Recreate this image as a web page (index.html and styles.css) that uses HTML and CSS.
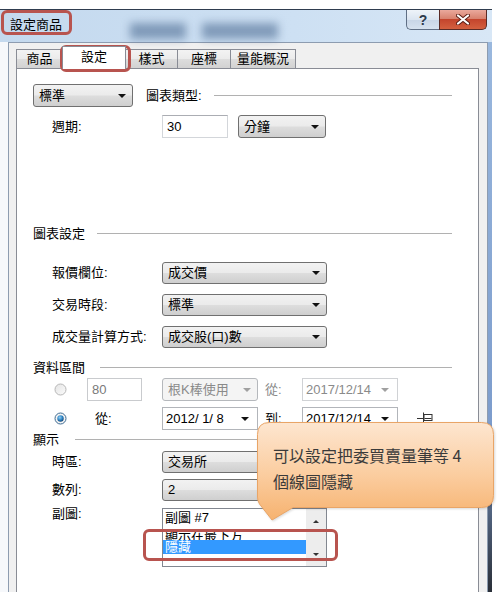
FILE: index.html
```html
<!DOCTYPE html>
<html lang="zh-Hant">
<head>
  <meta charset="UTF-8">
  <meta name="viewport" content="width=device-width, initial-scale=1.0">
  <title>設定商品</title>
  <link rel="stylesheet" href="styles.css">
</head>
<body>
  <div class="screen">
    <div class="titlebar">
      <span class="title">設定商品</span>
      <span class="haze haze-1"></span>
      <span class="haze haze-2"></span>
      <div class="caption-btns">
        <span class="cap cap-help">?</span>
        <span class="cap cap-close">
          <svg width="14" height="11" viewBox="0 0 14 11">
            <path d="M2 1.5 L12 9.5 M12 1.5 L2 9.5" stroke="#5a1d14" stroke-width="4" stroke-linecap="round"/>
            <path d="M2 1.5 L12 9.5 M12 1.5 L2 9.5" stroke="#fff" stroke-width="2.2" stroke-linecap="round"/>
          </svg>
        </span>
      </div>
    </div>

    <div class="frame">
      <div class="glass-left"></div>
      <div class="client">
        <div class="tabs">
          <div class="tab tab-w1">商品</div>
          <div class="tab tab-w2 active">設定</div>
          <div class="tab tab-w3">樣式</div>
          <div class="tab tab-w4">座標</div>
          <div class="tab tab-w5">量能概況</div>
        </div>

        <div class="panel">
          <div class="row row-type">
            <div class="combo w-type"><span>標準</span><i class="arrow"></i></div>
            <span class="type-label">圖表類型:</span>
            <span class="rule"></span>
          </div>

          <div class="row row-period">
            <span class="lbl">週期:</span>
            <div class="textbox w-period">30</div>
            <div class="combo w-unit"><span>分鐘</span><i class="arrow"></i></div>
          </div>

          <div class="group g-chart"><span>圖表設定</span><span class="rule"></span></div>

          <div class="row row-field first">
            <span class="lbl">報價欄位:</span>
            <div class="combo w-wide"><span>成交價</span><i class="arrow"></i></div>
          </div>
          <div class="row row-field">
            <span class="lbl">交易時段:</span>
            <div class="combo w-wide"><span>標準</span><i class="arrow"></i></div>
          </div>
          <div class="row row-field">
            <span class="lbl">成交量計算方式:</span>
            <div class="combo w-wide"><span>成交股(口)數</span><i class="arrow"></i></div>
          </div>

          <div class="group g-range"><span>資料區間</span><span class="rule"></span></div>

          <div class="row radio-row r-first">
            <svg class="radio" width="13" height="13" viewBox="0 0 13 13">
              <defs>
                <linearGradient id="rOff" x1="0" y1="0" x2="1" y2="1">
                  <stop offset="0" stop-color="#e4e4e4"/>
                  <stop offset="1" stop-color="#fbfbfb"/>
                </linearGradient>
              </defs>
              <circle cx="6.5" cy="6.5" r="5.5" fill="url(#rOff)" stroke="#b7b7b7"/>
            </svg>
            <div class="textbox disabled w-count">80</div>
            <div class="combo disabled w-date"><span>根K棒使用</span><i class="arrow"></i></div>
            <span class="sub-lbl muted">從:</span>
            <div class="datebox disabled w-date"><span>2017/12/14</span><i class="arrow"></i></div>
          </div>

          <div class="row radio-row r-second">
            <svg class="radio" width="13" height="13" viewBox="0 0 13 13">
              <defs>
                <radialGradient id="rDot" cx="0.4" cy="0.35" r="0.7">
                  <stop offset="0" stop-color="#8fd0f5"/>
                  <stop offset="0.6" stop-color="#2a7fc0"/>
                  <stop offset="1" stop-color="#123d6b"/>
                </radialGradient>
              </defs>
              <circle cx="6.5" cy="6.5" r="5.5" fill="#f4f4f4" stroke="#3c6a92"/>
              <circle cx="6.5" cy="6.5" r="3.2" fill="url(#rDot)"/>
            </svg>
            <span class="from-lbl">從:</span>
            <div class="datebox w-date"><span class="pre">2012/ 1/ 8</span><i class="arrow"></i></div>
            <span class="sub-lbl">到:</span>
            <div class="datebox w-date"><span>2017/12/14</span><i class="arrow"></i></div>
            <svg class="pin" width="17" height="12" viewBox="0 0 17 12">
              <path d="M0 6.5 H6 M6.5 0.5 V11.5" stroke="#333" stroke-width="1"/>
              <rect x="7" y="2.5" width="8" height="6" fill="#fff" stroke="#333" stroke-width="1"/>
              <path d="M7.5 6.5 H14.5" stroke="#333" stroke-width="1"/>
            </svg>
          </div>

          <div class="group g-show"><span>顯示</span><span class="rule"></span></div>

          <div class="row row-zone">
            <span class="lbl">時區:</span>
            <div class="combo w-wide"><span>交易所</span><i class="arrow"></i></div>
          </div>
          <div class="row row-series">
            <span class="lbl">數列:</span>
            <div class="combo w-wide"><span>2</span><i class="arrow"></i></div>
          </div>
          <div class="row row-sub">
            <span class="lbl lbl-top">副圖:</span>
            <div class="listbox">
              <div class="items">
                <div class="item">副圖 #7</div>
                <div class="item clipped">顯示在最下方</div>
                <div class="item selected">隱藏</div>
              </div>
              <div class="scrollbar">
                <i class="sb-up"></i>
                <i class="sb-down"></i>
              </div>
            </div>
          </div>
        </div>
      </div>
      <div class="glass-right"></div>
    </div>

    <div class="mark mark-title"></div>
    <div class="mark mark-tab"></div>
    <div class="mark mark-list"></div>

    <div class="callout">
      <svg class="callout-shape" width="238" height="100" viewBox="0 0 238 100">
        <defs>
          <linearGradient id="peach" x1="0" y1="0" x2="0" y2="1">
            <stop offset="0" stop-color="#fde6d0"/>
            <stop offset="0.55" stop-color="#fbcc9e"/>
            <stop offset="1" stop-color="#f6b26f"/>
          </linearGradient>
        </defs>
        <path d="M12.5 0.5 H224.5 Q236.5 0.5 236.5 12.5 V73.5 Q236.5 85.5 224.5 85.5 H36 L15 98 L2.5 82 Q0.5 79 0.5 75 V12.5 Q0.5 0.5 12.5 0.5 Z"
              fill="url(#peach)" stroke="#e9a567" stroke-width="1"/>
      </svg>
      <p class="callout-text">可以設定把委買賣量筆等 4<br>個線圖隱藏</p>
    </div>
  </div>
</body>
</html>
```

FILE: styles.css
```css
* { margin: 0; padding: 0; box-sizing: border-box; }
body {
  background: #fff;
  font-family: "Liberation Sans", "Noto Sans CJK TC", sans-serif;
  font-size: 13px;
  line-height: 16px;
  color: #000;
}
.screen {
  position: relative;
  width: 502px;
  height: 592px;
  overflow: hidden;
  padding-top: 9px;
}

/* title bar */
.titlebar {
  display: flex;
  align-items: center;
  width: 492px;
  height: 33px;
  border-top: 1px solid #2f3d4f;
  background: linear-gradient(to right, #c4d9ee 0%, #cde0f3 60%, #d8e7f6 100%);
}
.title {
  padding-left: 10px;
  padding-bottom: 2px;
  font-size: 13px;
}
.haze {
  align-self: flex-end;
  height: 16px;
  margin-bottom: 3px;
  background: rgba(70, 100, 140, 0.55);
  filter: blur(4px);
}
.haze-1 { width: 56px; margin-left: 68px; }
.haze-2 { width: 76px; margin-left: 16px; }
.caption-btns {
  display: flex;
  align-self: flex-start;
  margin-left: auto;
  margin-right: 5px;
}
.cap {
  display: flex;
  align-items: center;
  justify-content: center;
  height: 20px;
  border: 1px solid #5f6f85;
  border-top: none;
}
.cap-help {
  width: 33px;
  border-right: none;
  border-bottom-left-radius: 5px;
  background: linear-gradient(#eef3f9 0%, #dbe5f1 50%, #c7d5e6 51%, #d6e2ef 100%);
  color: #2d3a4c;
  font-weight: bold;
  font-size: 14px;
}
.cap-close {
  width: 48px;
  border-color: #5a2b26;
  border-bottom-right-radius: 5px;
  background: linear-gradient(#eaa99c 0%, #d8826f 45%, #c4452d 50%, #d4603f 100%);
}

/* frame */
.frame {
  display: flex;
  width: 492px;
  height: 550px;
}
.glass-left {
  width: 8px;
  background: #f6f8fb;
}
.glass-right {
  width: 4px;
  background: linear-gradient(#9ab8de 0%, #7c9ccc 70%, #2a2f38 100%);
}
.client {
  flex: 1;
  display: flex;
  flex-direction: column;
  background: #f0f0f0;
  border: 1px solid #8d9cb0;
  border-bottom: none;
  padding: 0 8px 0 7px;
}

/* tabs */
.tabs {
  display: flex;
  align-items: flex-end;
  height: 25px;
}
.tab {
  height: 19px;
  border: 1px solid #898c95;
  border-bottom: none;
  margin-left: -1px;
  background: linear-gradient(#f3f3f3 0%, #ebebeb 50%, #dddddd 51%, #d2d2d2 100%);
  text-align: center;
  line-height: 17px;
}
.tab:first-child { margin-left: 0; }
.tab.active {
  position: relative;
  z-index: 1;
  height: 23px;
  margin-bottom: -1px;
  background: #fff;
  line-height: 20px;
}
.tab-w1 { width: 47px; }
.tab-w2 { width: 64px; }
.tab-w3 { width: 53px; }
.tab-w4 { width: 54px; }
.tab-w5 { width: 66px; }

/* panel */
.panel {
  flex: 1;
  background: #fff;
  border: 1px solid #898c95;
  border-bottom: none;
  padding: 15px 26px 0 16px;
}
.row {
  display: flex;
  align-items: center;
}
.lbl {
  width: 129px;
  padding-left: 19px;
  white-space: nowrap;
}
.rule {
  flex: 1;
  height: 0;
  border-top: 1px solid #b1b1b1;
  margin-left: 12px;
  margin-top: -1px;
}

.row-type { height: 23px; }
.type-label { margin-left: 13px; }
.row-period { height: 23px; margin-top: 8px; }

.group {
  display: flex;
  align-items: center;
  height: 16px;
}
.g-chart { margin-top: 88px; }
.g-range { margin-top: 12px; }
.g-range .rule { margin-left: 15px; }
.g-show { margin-top: 2px; }
.g-show .rule { margin-left: 16px; }

.row-field { height: 22px; margin-top: 10px; }
.row-field.first { margin-top: 20px; }

/* controls */
.combo,
.datebox,
.textbox {
  display: flex;
  align-items: center;
  height: 100%;
  white-space: nowrap;
}
.combo {
  justify-content: space-between;
  padding: 0 6px 0 5px;
  border: 1px solid #707070;
  border-radius: 3px;
  background: linear-gradient(#f2f2f2 0%, #ebebeb 48%, #dddddd 52%, #cfcfcf 100%);
}
.combo.disabled {
  border-color: #b5b8bc;
  background: #f4f4f4;
  color: #8a8a8a;
}
.arrow {
  width: 0;
  height: 0;
  border-left: 4px solid transparent;
  border-right: 4px solid transparent;
  border-top: 4px solid #111;
}
.disabled .arrow { border-top-color: #a0a0a0; }
.textbox {
  padding-left: 4px;
  border: 1px solid #d3d6da;
  border-top-color: #abadb3;
  background: #fff;
}
.textbox.disabled {
  border-color: #c9cbce;
  color: #7a7a7a;
}
.datebox {
  justify-content: space-between;
  padding: 0 8px 0 3px;
  border: 1px solid #b2b5ba;
  background: #fff;
}
.datebox.disabled {
  border-color: #d0d2d5;
  color: #8a8a8a;
}
.pre { white-space: pre; }

.w-type { width: 100px; height: 23px; }
.w-period { width: 66px; }
.w-unit { width: 88px; margin-left: 10px; }
.w-wide { width: 165px; }
.w-count { width: 55px; margin-left: 20px; }
.w-date { width: 96px; }
.combo.w-date { margin-left: 20px; }

.radio-row { height: 23px; padding-left: 21px; }
.r-first { margin-top: 2px; }
.r-second { margin-top: 6px; }
.sub-lbl {
  width: 44px;
  padding-left: 7px;
}
.muted { color: #8a8a8a; }
.from-lbl {
  width: 95px;
  padding-left: 28px;
}
.pin { margin-left: 19px; margin-top: -2px; }

.row-zone { height: 22px; margin-top: 3px; }
.row-series { height: 22px; margin-top: 6px; }
.row-sub {
  align-items: flex-start;
  margin-top: 7px;
}
.lbl-top { margin-top: -2px; }

/* list box */
.listbox {
  display: flex;
  width: 165px;
  height: 59px;
  border: 1px solid #828790;
  background: #fff;
}
.items {
  flex: 1;
  padding-top: 1px;
}
.item {
  height: 16px;
  padding-left: 2px;
  white-space: nowrap;
}
.item.clipped {
  height: 14px;
  padding-top: 2px;
  overflow: hidden;
}
.item.selected {
  height: 14px;
  line-height: 14px;
  background: #3399ff;
  color: #fff;
}
.scrollbar {
  display: flex;
  flex-direction: column;
  align-items: center;
  justify-content: space-between;
  width: 20px;
  padding: 11px 0 10px;
  background: #ededed;
}
.sb-up,
.sb-down {
  width: 0;
  height: 0;
  border-left: 3px solid transparent;
  border-right: 3px solid transparent;
}
.sb-up { border-bottom: 3px solid #333; }
.sb-down { border-top: 3px solid #333; }

/* annotation marks */
.mark {
  position: absolute;
  border: 3px solid #b8544f;
  border-radius: 6px;
}
.mark-title { left: 1px; top: 10px; width: 71px; height: 25px; }
.mark-tab { left: 60px; top: 45px; width: 71px; height: 27px; }
.mark-list { left: 143px; top: 529px; width: 195px; height: 32px; }

/* callout */
.callout {
  position: absolute;
  left: 257px;
  top: 422px;
  width: 238px;
  height: 100px;
}
.callout-shape {
  position: absolute;
  left: 0;
  top: 0;
  filter: drop-shadow(1px 1px 1px rgba(0, 0, 0, 0.15));
}
.callout-text {
  position: relative;
  padding: 20px 0 0 16px;
  font-family: "Noto Sans CJK TC", sans-serif;
  font-size: 16px;
  line-height: 26px;
  color: #3a3a3a;
}
```
